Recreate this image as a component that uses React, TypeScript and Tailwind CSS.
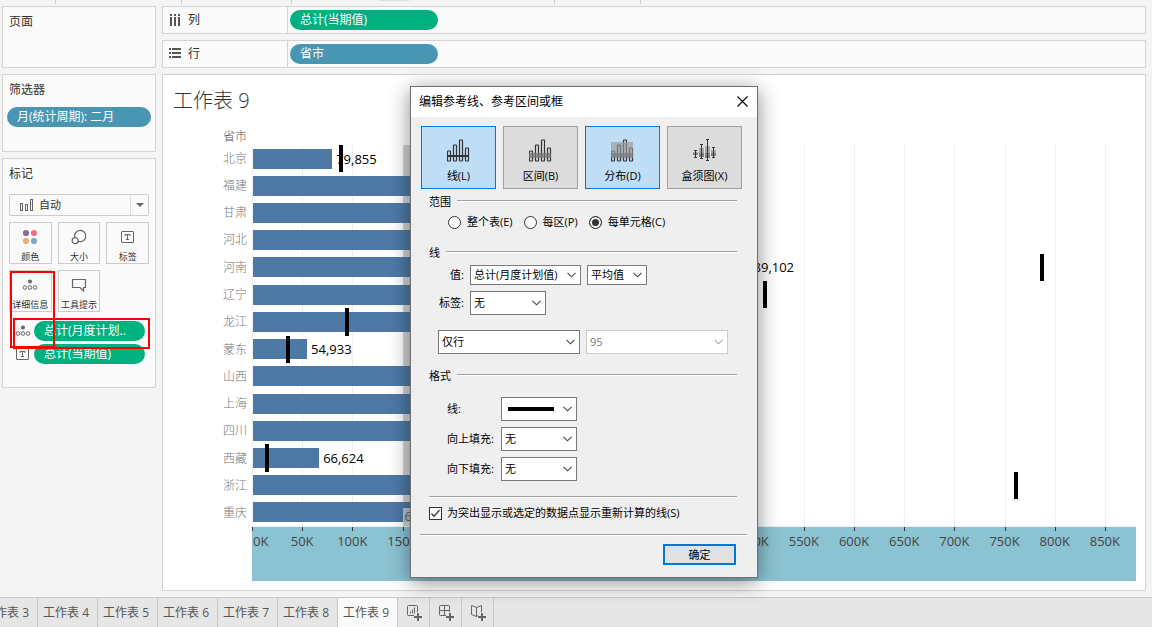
import React, { useState } from 'react';

interface RegionRow {
  name: string;
  value: number;
  plan?: number;
  label?: string;
}

interface PillProps {
  text: string;
  tone: 'green' | 'blue';
  className?: string;
}

interface SelectBoxProps {
  id: string;
  label?: string;
  options: string[];
  className?: string;
  disabled?: boolean;
}

const AXIS_MAX = 881;

const regions: RegionRow[] = [
  { name: '北京', value: 79, plan: 88.5, label: '79,855' },
  { name: '福建', value: 320 },
  { name: '甘肃', value: 260 },
  { name: '河北', value: 410 },
  { name: '河南', value: 488, plan: 787, label: '489,102' },
  { name: '辽宁', value: 380, plan: 511 },
  { name: '龙江', value: 240, plan: 94.5 },
  { name: '蒙东', value: 54, plan: 36, label: '54,933' },
  { name: '山西', value: 330 },
  { name: '上海', value: 290 },
  { name: '四川', value: 400 },
  { name: '西藏', value: 66, plan: 15, label: '66,624' },
  { name: '浙江', value: 430, plan: 761 },
  { name: '重庆', value: 210 },
];

const ticks = Array.from({ length: 18 }, (_, i) => i * 50);
const sheets = [3, 4, 5, 6, 7, 8, 9];
const percent = (value: number) => `${(value / AXIS_MAX) * 100}%`;

const Pill: React.FC<PillProps> = ({ text, tone, className = '' }) => (
  <button
    className={`h-5 rounded-full text-left text-xs leading-5 text-white whitespace-nowrap px-2.5 ${
      tone === 'green' ? 'bg-[#00b180]' : 'bg-[#4996b2]'
    } ${className}`}
  >
    {text}
  </button>
);

const DetailIcon = () => (
  <svg width="16" height="12" viewBox="0 0 16 12" fill="none" stroke="#666">
    <circle cx="8" cy="2.5" r="2" fill="#666" stroke="none" />
    <circle cx="3" cy="8.5" r="1.8" />
    <circle cx="8" cy="8.5" r="1.8" />
    <circle cx="13" cy="8.5" r="1.8" />
  </svg>
);

const TextIcon = () => (
  <svg width="14" height="13" viewBox="0 0 14 13" fill="none" stroke="#666">
    <rect x="0.5" y="0.5" width="12" height="11" rx="0.5" />
    <path d="M4 5V3.5h5V5M6.5 3.5v5M5 8.5h3" />
  </svg>
);

const ColorIcon = () => (
  <svg width="16" height="16" viewBox="0 0 16 16">
    <circle cx="4" cy="4" r="3.1" fill="#85709a" />
    <circle cx="12" cy="4" r="3.1" fill="#f9707f" />
    <circle cx="4" cy="12" r="3.1" fill="#f3a97c" />
    <circle cx="12" cy="12" r="3.1" fill="#82a5cf" />
  </svg>
);

const SizeIcon = () => (
  <svg width="16" height="16" viewBox="0 0 16 16" fill="none" stroke="#666" strokeWidth="1.2">
    <path d="M3.8 8.5A5.6 5.6 0 1 1 7 12.2" />
    <circle cx="4.2" cy="11.7" r="3" />
  </svg>
);

const TooltipIcon = () => (
  <svg width="16" height="14" viewBox="0 0 16 14" fill="none" stroke="#666" strokeWidth="1.2">
    <path d="M1.5 1.5h13v8h-2v3.5L9 9.5H1.5z" />
  </svg>
);

const markButtons = [
  { label: '颜色', icon: <ColorIcon /> },
  { label: '大小', icon: <SizeIcon /> },
  { label: '标签', icon: <TextIcon /> },
  { label: '详细信息', icon: <DetailIcon /> },
  { label: '工具提示', icon: <TooltipIcon /> },
];

const Sidebar = () => (
  <aside className="flex w-[154px] shrink-0 flex-col gap-1.5">
    <section className="h-[62px] border border-[#d4d4d4] bg-[#fafafa] px-1.5 pt-[7px]">
      <h2 className="text-xs leading-4">页面</h2>
    </section>
    <section className="h-[78px] border border-[#d4d4d4] bg-[#fafafa] px-1 pt-[7px]">
      <h2 className="px-0.5 text-xs leading-4">筛选器</h2>
      <Pill text="月(统计周期): 二月" tone="blue" className="mt-[9px] w-full" />
    </section>
    <section className="relative h-[230px] border border-[#d4d4d4] bg-[#fafafa] px-1.5 pt-[7px]">
      <h2 className="text-xs leading-4">标记</h2>
      <button className="mt-3 flex h-[22px] w-full items-center rounded-xs border border-[#ccc] pl-2.5 text-[11px]">
        <svg width="13" height="12" viewBox="0 0 13 12" fill="none" stroke="#666">
          <rect x="0.5" y="4.5" width="2" height="7" />
          <rect x="5.5" y="5.5" width="2" height="6" />
          <rect x="10.5" y="0.5" width="2" height="11" />
        </svg>
        <span className="ml-1.5 flex-1 text-left">自动</span>
        <span className="flex h-full w-[18px] items-center justify-center border-l border-[#ddd]">
          <svg width="8" height="4" viewBox="0 0 8 4" fill="#666">
            <path d="M0 0h8L4 4z" />
          </svg>
        </span>
      </button>
      <div className="mt-1.5 grid grid-cols-3 gap-1.5">
        {markButtons.map((item) => (
          <button
            key={item.label}
            className="flex h-[42px] flex-col items-center justify-between border border-[#ccc] pt-1.5 text-[9px] leading-3 whitespace-nowrap"
          >
            <span className="flex h-4 items-center">{item.icon}</span>
            <span>{item.label}</span>
          </button>
        ))}
      </div>
      <div className="mt-[9px] flex flex-col gap-[3px] pr-1 pl-1.5">
        <div className="flex items-center gap-[3px]">
          <DetailIcon />
          <Pill text="总计(月度计划.." tone="green" className="flex-1" />
        </div>
        <div className="flex items-center gap-[3px]">
          <span className="flex w-4 justify-center">
            <TextIcon />
          </span>
          <Pill text="总计(当期值)" tone="green" className="flex-1" />
        </div>
      </div>
      <div className="pointer-events-none absolute top-[112px] left-[7px] h-[77px] w-[45px] border-2 border-[#f00]" />
      <div className="pointer-events-none absolute top-[159px] left-[10px] h-[31px] w-[137px] border-2 border-[#f00]" />
    </section>
  </aside>
);

const Shelf: React.FC<{ label: string; icon: React.ReactNode; children: React.ReactNode }> = ({
  label,
  icon,
  children,
}) => (
  <div className="flex h-7 items-center border border-[#d4d4d4] bg-[#fafafa]">
    <div className="flex h-full w-[125px] items-center gap-[7px] border-r border-[#d4d4d4] pl-1.5 text-xs">
      {icon}
      <span>{label}</span>
    </div>
    <div className="flex pl-0.5">{children}</div>
  </div>
);

const Chart = () => (
  <div className="flex min-h-0 flex-1">
    <div className="flex w-[89px] shrink-0 flex-col pr-[5px] pb-[54px] text-right text-xs font-light text-[#777]">
      {regions.map((row) => (
        <div key={row.name} className="flex flex-1 items-center justify-end">
          {row.name}
        </div>
      ))}
    </div>
    <div className="flex min-w-0 flex-1 flex-col">
      <div className="relative flex flex-1 flex-col border-b border-[#eee]">
        {ticks.map((tick) => (
          <div
            key={tick}
            className="absolute inset-y-0 w-px bg-[#efefef]"
            style={{ left: percent(tick) }}
          />
        ))}
        <div
          className="absolute inset-y-0 bg-[#d3d3d3]"
          style={{ left: percent(150), width: percent(260) }}
        />
        {regions.map((row) => (
          <div key={row.name} className="relative flex flex-1 items-center pl-px">
            <div className="h-5 bg-[#4e79a7]" style={{ width: percent(row.value) }} />
            {row.label && <span className="pl-1 text-[13px] leading-5 text-black">{row.label}</span>}
            {row.plan && (
              <div
                className="absolute inset-y-0 w-1 -translate-x-1/2 bg-black"
                style={{ left: percent(row.plan) }}
              />
            )}
          </div>
        ))}
        <span
          className="absolute bottom-0.5 bg-[#d3d3d3]/80 px-0.5 text-[13px] leading-4 text-[#666]"
          style={{ left: percent(150) }}
        >
          6
        </span>
      </div>
      <div className="relative h-[54px] bg-[#8cc3d2] text-[13px] leading-4 text-[#444]">
        {ticks.map((tick) => (
          <React.Fragment key={tick}>
            <div className="absolute top-0 h-1 w-px bg-[#333]" style={{ left: percent(tick) }} />
            <span
              className={`absolute top-1.5 ${tick === 0 ? 'pl-px' : '-translate-x-1/2'}`}
              style={{ left: percent(tick) }}
            >
              {tick}K
            </span>
          </React.Fragment>
        ))}
      </div>
    </div>
  </div>
);

const Chevron: React.FC<{ color?: string }> = ({ color = '#444' }) => (
  <svg
    className="pointer-events-none absolute top-1/2 right-1 -translate-y-1/2"
    width="10"
    height="6"
    viewBox="0 0 10 6"
    fill="none"
    stroke={color}
    strokeWidth="1.1"
  >
    <path d="M0.5 0.8l4 4 4-4" />
  </svg>
);

const SelectBox: React.FC<SelectBoxProps> = ({ id, label, options, className = '', disabled }) => (
  <span className={`relative inline-block ${className}`}>
    <select
      id={id}
      aria-label={label}
      disabled={disabled}
      className="size-full appearance-none border border-[#7a7a7a] bg-white pr-3 pl-[3px] text-[11px] leading-4 disabled:border-[#ccc] disabled:text-[#777]"
    >
      {options.map((option) => (
        <option key={option}>{option}</option>
      ))}
    </select>
    <Chevron color={disabled ? '#aaa' : '#444'} />
  </span>
);

const SectionTitle: React.FC<{ text: string; className?: string }> = ({ text, className = '' }) => (
  <div className={`flex h-4 gap-1.5 pr-2.5 pl-2 ${className}`}>
    <h3 className="leading-4">{text}</h3>
    <div className="mt-1.5 h-0.5 flex-1 border-t border-[#a0a0a0] bg-white" />
  </div>
);

const BarsIcon: React.FC<{ kind: string }> = ({ kind }) => (
  <svg width="23" height="24" viewBox="1 0 23 24" fill="none" stroke="#333">
    {kind === 'box' ? (
      <>
        <g fill="#a8a8a8" stroke="none">
          <path d="M1 13h5v3H1zM7 9h5v9H7zM13 7h5v12h-5zM19 11h5v6h-5z" />
          <path d="M1 14h5v2H1zM7 14h5v4H7zM13 14h5v5h-5zM19 14h5v3h-5z" fill="#808080" />
        </g>
        <path d="M3.5 11v8M2 11.500h3M2 18.500h3M9.500 5v15M8 5.500h3M8 19.500h3M15.500 0v22M14 0.500h3M14 21.500h3M21.500 8v11M20 8.500h3M20 18.500h3" />
      </>
    ) : (
      <>
        <g strokeWidth="1.2">
          <rect x="1.5" y="12" width="3" height="10" rx="0.5" />
          <rect x="7.5" y="6" width="3" height="16" rx="0.5" />
          <rect x="13.5" y="1" width="3" height="21" rx="0.5" />
          <rect x="19.5" y="9" width="3" height="13" rx="0.5" />
        </g>
        {kind === 'line' && <path d="M1 17h22" strokeWidth="2" />}
        {kind === 'band' && (
          <rect x="1" y="14" width="22" height="5" fill="#777" fillOpacity="0.75" stroke="none" />
        )}
        {kind === 'dist' && (
          <g fill="#999" stroke="none">
            <rect x="1" y="3" width="22" height="16" fillOpacity="0.65" />
            <rect x="1" y="14" width="22" height="5" fill="#777" fillOpacity="0.6" />
          </g>
        )}
      </>
    )}
  </svg>
);

const kinds = [
  { id: 'line', label: '线(L)', active: true },
  { id: 'band', label: '区间(B)', active: false },
  { id: 'dist', label: '分布(D)', active: true },
  { id: 'box', label: '盒须图(X)', active: false },
];

const ReferenceLineDialog = () => {
  const [scope, setScope] = useState('每单元格(C)');
  const [recalculate, setRecalculate] = useState(true);

  return (
    <div
      role="dialog"
      aria-labelledby="dialog-title"
      className="absolute top-[86px] left-[410px] w-[348px] border border-[#707070] bg-[#efefef] text-[11px] leading-4 text-black shadow-[0_4px_20px_rgba(0,0,0,0.45)]"
    >
      <div className="flex h-[30px] items-center justify-between bg-white pr-[9px] pl-2">
        <h2 id="dialog-title" className="text-xs">
          编辑参考线、参考区间或框
        </h2>
        <button aria-label="关闭" className="pb-0.5">
          <svg width="11" height="11" viewBox="0 0 11 11" stroke="#000" strokeWidth="1.1">
            <path d="M0.5 0.5l10 10M10.5 0.5l-10 10" />
          </svg>
        </button>
      </div>
      <div className="flex flex-col px-2.5 pt-[9px] pb-3">
        <div className="flex gap-[7px]">
          {kinds.map((kind) => (
            <button
              key={kind.id}
              className={`flex h-[63px] w-[75px] flex-col items-center justify-between border pt-3 pb-1 ${
                kind.active ? 'border-[#0078d7] bg-[#bfddf5]' : 'border-[#a0a0a0] bg-[#dcdcdc]'
              }`}
            >
              <BarsIcon kind={kind.id} />
              <span>{kind.label}</span>
            </button>
          ))}
        </div>

        <SectionTitle text="范围" className="mt-[5px]" />
        <div className="mt-1 flex h-4 items-center gap-[11px] pl-[27px]">
          {['整个表(E)', '每区(P)', '每单元格(C)'].map((name) => (
            <label key={name} className="flex items-center gap-1.5 whitespace-nowrap">
              <input
                type="radio"
                name="scope"
                checked={scope === name}
                onChange={() => setScope(name)}
                className="size-[13px] appearance-none rounded-full border border-[#333] bg-white checked:bg-[#333] checked:shadow-[inset_0_0_0_2px_white]"
              />
              {name}
            </label>
          ))}
        </div>

        <SectionTitle text="线" className="mt-[15px]" />
        <div className="mt-1 flex items-center gap-1.5">
          <label htmlFor="value-field" className="w-[43px] text-right">
            值:
          </label>
          <SelectBox id="value-field" options={['总计(月度计划值)']} className="h-5 w-[111px]" />
          <SelectBox id="value-agg" label="聚合" options={['平均值']} className="h-5 w-[60px]" />
        </div>
        <div className="mt-1.5 flex items-center gap-1.5">
          <label htmlFor="value-label" className="w-[43px] text-right">
            标签:
          </label>
          <SelectBox id="value-label" options={['无']} className="h-6 w-[76px]" />
        </div>
        <div className="mt-[15px] flex gap-1.5 pl-[17px]">
          <SelectBox id="line-only" label="线类型" options={['仅行']} className="h-6 w-[142px]" />
          <SelectBox id="confidence" label="置信区间" options={['95']} className="h-6 w-[142px]" disabled />
        </div>

        <SectionTitle text="格式" className="mt-[14px]" />
        <div className="mt-[13px] flex flex-col gap-1.5 pl-[26px]">
          <div className="flex items-center">
            <label htmlFor="format-line" className="w-[54px]">
              线:
            </label>
            <span className="relative">
              <SelectBox id="format-line" options={['']} className="block h-6 w-[76px]" />
              <span className="pointer-events-none absolute top-2.5 left-[7px] h-1 w-[46px] bg-black" />
            </span>
          </div>
          <div className="flex items-center">
            <label htmlFor="fill-above" className="w-[54px]">
              向上填充:
            </label>
            <SelectBox id="fill-above" options={['无']} className="h-6 w-[76px]" />
          </div>
          <div className="flex items-center">
            <label htmlFor="fill-below" className="w-[54px]">
              向下填充:
            </label>
            <SelectBox id="fill-below" options={['无']} className="h-6 w-[76px]" />
          </div>
        </div>

        <div className="mt-[15px] mr-2.5 ml-2 h-0.5 border-t border-[#a0a0a0] bg-white" />
        <label className="relative mt-[7px] ml-2 flex h-4 items-center gap-[5px]">
          <input
            type="checkbox"
            checked={recalculate}
            onChange={(e) => setRecalculate(e.target.checked)}
            className="size-[13px] appearance-none border border-[#333] bg-white"
          />
          {recalculate && (
            <svg
              className="pointer-events-none absolute left-0"
              width="13"
              height="13"
              viewBox="0 0 13 13"
              fill="none"
              stroke="#333"
              strokeWidth="1.3"
            >
              <path d="M2.5 6.5L5 9.3l5.5-6" />
            </svg>
          )}
          为突出显示或选定的数据点显示重新计算的线(S)
        </label>
        <div className="mt-[13px] -ml-px h-0.5 border-t border-[#a0a0a0] bg-white" />
        <button className="mt-2 mr-[11px] h-[21px] w-[73px] self-end border-2 border-[#0078d7] bg-[#e1e1e1] leading-[17px]">
          确定
        </button>
      </div>
    </div>
  );
};

const newSheetButtons = [
  { label: '新建工作表', path: 'M11.5 7V1.5a1 1 0 0 0-1-1h-8a1 1 0 0 0-1 1v8a1 1 0 0 0 1 1H8M4.5 8.500V6.500M6.500 8.500v-4M8.500 8.500v-6' },
  { label: '新建仪表板', path: 'M11.5 7V1.5a1 1 0 0 0-1-1h-8a1 1 0 0 0-1 1v8a1 1 0 0 0 1 1H8M6.500 0.500v10M1.500 5.500h10' },
  { label: '新建故事', path: 'M8 10.500l-1.500 1L1.500 9.500V0.500l5 2 5-2V7M6.500 2.500v9' },
];

const SheetTabs = () => (
  <nav className="flex h-[30px] overflow-hidden border-t border-[#c8c8c8] bg-[#e6e6e6] text-xs text-[#555]">
    {sheets.map((sheet, i) => (
      <button
        key={sheet}
        className={`w-[60px] shrink-0 border-r border-[#c8c8c8] pr-[3px] whitespace-nowrap ${
          i === 0 ? '-ml-[22px]' : ''
        } ${sheet === 9 ? 'bg-[#fafafa]' : ''}`}
      >
        工作表 {sheet}
      </button>
    ))}
    {newSheetButtons.map((item) => (
      <button
        key={item.label}
        aria-label={item.label}
        className="flex w-8 shrink-0 items-center justify-center border-r border-[#c8c8c8]"
      >
        <svg width="16" height="16" viewBox="0 0 16 16" fill="none" stroke="#666">
          <path d={item.path} />
          <path d="M12 8v8M8 12h8" strokeWidth="2" />
        </svg>
      </button>
    ))}
  </nav>
);

export default function App() {
  return (
    <div className="relative flex min-h-screen flex-col bg-[#f4f4f4] font-['Open_Sans','Noto_Sans_CJK_SC',sans-serif] text-[#333]">
      <div className="flex h-1.5 items-start">
        <i className="ml-[55px] h-1 w-px bg-[#ccc]" />
        <i className="ml-[125px] h-1 w-px bg-[#ccc]" />
        <i className="ml-[109px] h-1 w-px bg-[#ccc]" />
        <i className="ml-[87px] h-px w-[30px] bg-[#ddd]" />
        <i className="ml-[145px] h-1 w-px bg-[#ccc]" />
        <i className="ml-[85px] h-1 w-px bg-[#ccc]" />
      </div>
      <div className="flex flex-1 gap-1.5 pr-1.5 pb-1.5 pl-0.5">
        <Sidebar />
        <main className="flex min-w-0 flex-1 flex-col gap-1.5">
          <Shelf
            label="列"
            icon={
              <svg width="12" height="13" viewBox="0 0 12 13" fill="#555">
                <path d="M1 0h2v2H1zM5 0h2v2H5zM9 0h2v2H9zM1 3h2v9H1zM5 3h2v9H5zM9 3h2v9H9z" />
              </svg>
            }
          >
            <Pill text="总计(当期值)" tone="green" className="w-[148px]" />
          </Shelf>
          <Shelf
            label="行"
            icon={
              <svg width="12" height="12" viewBox="0 0 12 12" fill="#555">
                <path d="M0 0h2v2H0zM3 0h9v2H3zM0 4h2v2H0zM3 4h9v2H3zM0 8h2v2H0zM3 8h9v2H3z" />
              </svg>
            }
          >
            <Pill text="省市" tone="blue" className="w-[148px]" />
          </Shelf>
          <section className="flex flex-1 flex-col border border-[#d4d4d4] bg-white pr-[9px] pb-[9px]">
            <h1 className="h-[52px] pt-[11px] pl-2.5 text-xl leading-[30px] font-light">工作表 9</h1>
            <div className="h-[18px] w-[89px] pr-[5px] text-right text-xs leading-5 font-light text-[#555]">
              省市
            </div>
            <Chart />
          </section>
        </main>
      </div>
      <SheetTabs />
      <ReferenceLineDialog />
    </div>
  );
}
